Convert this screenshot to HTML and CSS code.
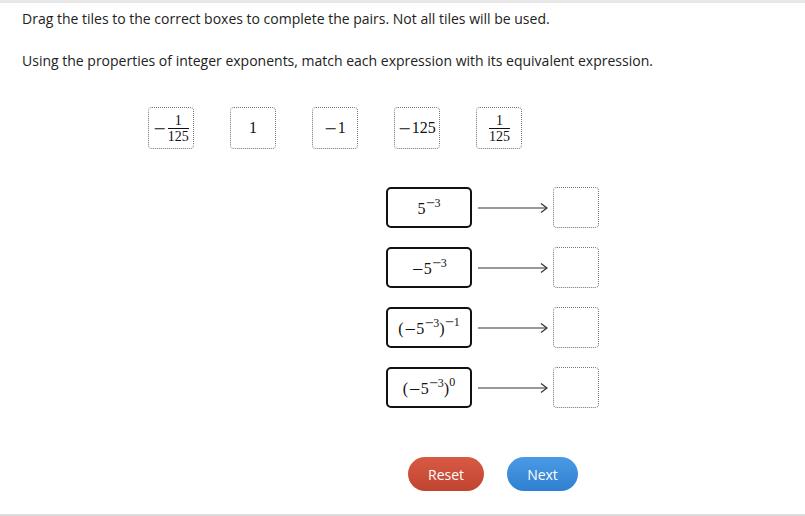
FILE: index.html
```html
<!DOCTYPE html>
<html>
<head>
<meta charset="utf-8">
<link rel="stylesheet" href="styles.css">
</head>
<body>
<div class="page">
  <p class="line first">Drag the tiles to the correct boxes to complete the pairs. Not all tiles will be used.</p>
  <p class="line second">Using the properties of integer exponents, match each expression with its equivalent expression.</p>

  <div class="tiles">
    <div class="tile"><span class="m"><span class="mi">&minus;</span><span class="frac"><span class="num">1</span><span class="den">125</span></span></span></div>
    <div class="tile"><span class="m">1</span></div>
    <div class="tile"><span class="m"><span class="mi">&minus;</span>1</span></div>
    <div class="tile"><span class="m"><span class="mi">&minus;</span>125</span></div>
    <div class="tile"><span class="m"><span class="frac"><span class="num">1</span><span class="den">125</span></span></span></div>
  </div>

  <div class="pairs">
    <div class="pair">
      <div class="expr"><span class="mx">5<span class="sup"><span class="mi">&minus;</span>3</span></span></div>
      <div class="arrow"><svg width="70" height="12" viewBox="0 0 70 12"><line x1="0" y1="6" x2="69" y2="6" stroke="#333" stroke-width="1"/><polyline points="63,1.5 69,6 63,10.5" fill="none" stroke="#333" stroke-width="1.2"/></svg></div>
      <div class="drop"></div>
    </div>
    <div class="pair">
      <div class="expr"><span class="mx"><span class="mi">&minus;</span>5<span class="sup"><span class="mi">&minus;</span>3</span></span></div>
      <div class="arrow"><svg width="70" height="12" viewBox="0 0 70 12"><line x1="0" y1="6" x2="69" y2="6" stroke="#333" stroke-width="1"/><polyline points="63,1.5 69,6 63,10.5" fill="none" stroke="#333" stroke-width="1.2"/></svg></div>
      <div class="drop"></div>
    </div>
    <div class="pair">
      <div class="expr"><span class="mx"><span class="paren">(</span><span class="mi">&minus;</span>5<span class="sup"><span class="mi">&minus;</span>3</span><span class="paren">)</span><span class="sup outer"><span class="mi">&minus;</span>1</span></span></div>
      <div class="arrow"><svg width="70" height="12" viewBox="0 0 70 12"><line x1="0" y1="6" x2="69" y2="6" stroke="#333" stroke-width="1"/><polyline points="63,1.5 69,6 63,10.5" fill="none" stroke="#333" stroke-width="1.2"/></svg></div>
      <div class="drop"></div>
    </div>
    <div class="pair">
      <div class="expr"><span class="mx"><span class="paren">(</span><span class="mi">&minus;</span>5<span class="sup"><span class="mi">&minus;</span>3</span><span class="paren">)</span><span class="sup outer">0</span></span></div>
      <div class="arrow"><svg width="70" height="12" viewBox="0 0 70 12"><line x1="0" y1="6" x2="69" y2="6" stroke="#333" stroke-width="1"/><polyline points="63,1.5 69,6 63,10.5" fill="none" stroke="#333" stroke-width="1.2"/></svg></div>
      <div class="drop"></div>
    </div>
  </div>

  <div class="buttons">
    <button class="btn reset">Reset</button>
    <button class="btn next">Next</button>
  </div>
</div>
</body>
</html>
```

FILE: styles.css
```css
html, body {
  margin: 0;
  padding: 0;
  background: #fff;
}
.page {
  box-sizing: border-box;
  width: 805px;
  height: 516px;
  border-top: 3px solid #e8e8e8;
  border-bottom: 2px solid #dcdcdc;
  font-family: "Open Sans", "Liberation Sans", sans-serif;
  color: #222;
  display: flex;
  flex-direction: column;
}
.line {
  margin: 0;
  padding-left: 22px;
  font-size: 14px;
  line-height: 20px;
}
.first { margin-top: 6px; }
.second { margin-top: 22px; }

.tiles {
  display: flex;
  gap: 36px;
  padding-left: 148px;
  margin-top: 36px;
}
.tile, .drop {
  box-sizing: border-box;
  width: 46px;
  height: 42px;
  border: 1px dotted #777;
  border-radius: 4px;
  display: flex;
  align-items: center;
  justify-content: center;
}
.m, .mx {
  font-family: "Liberation Serif", "DejaVu Serif", serif;
  font-size: 16px;
  color: #111;
  white-space: nowrap;
}
.m {
  display: inline-flex;
  align-items: center;
}
.mi {
  display: inline-block;
  font-family: "DejaVu Serif", serif;
  font-weight: 300;
  transform: scaleY(0.8);
}
.frac {
  display: inline-flex;
  flex-direction: column;
  align-items: center;
  font-size: 14px;
  line-height: 13px;
  margin-left: 1px;
}
.num {
  border-bottom: 1px solid #111;
  padding: 0 1px 1px;
  align-self: stretch;
  text-align: center;
}
.den { padding-top: 1px; }

.pairs {
  display: flex;
  flex-direction: column;
  gap: 19px;
  padding-left: 386px;
  margin-top: 38px;
}
.pair {
  display: flex;
  align-items: center;
  height: 41px;
}
.expr {
  box-sizing: border-box;
  width: 86px;
  height: 41px;
  border: 2px solid #111;
  border-radius: 5px;
  display: flex;
  align-items: center;
  justify-content: center;
  padding-top: 2px;
}
.mx { line-height: 20px; }
.mx > .mi { font-size: 15px; }
.sup {
  font-size: 12px;
  vertical-align: 7px;
  line-height: 0;
}
.sup .mi { font-size: 12px; letter-spacing: -1px; }
.paren { font-size: 16px; }
.sup.outer { vertical-align: 8px; }
.arrow {
  margin-left: 6px;
  width: 70px;
  height: 12px;
  display: flex;
}
.drop {
  margin-left: 5px;
  height: 41px;
}

.buttons {
  display: flex;
  gap: 23px;
  padding-left: 408px;
  margin-top: 49px;
}
.btn {
  height: 34px;
  border: none;
  border-radius: 17px;
  color: #fff;
  font-family: "Open Sans", "Liberation Sans", sans-serif;
  font-size: 14px;
  padding: 0;
}
.reset {
  width: 76px;
  background: linear-gradient(#d85a44, #c0442f);
}
.next {
  width: 71px;
  background: linear-gradient(#4b9ae6, #2f80d0);
}
```
